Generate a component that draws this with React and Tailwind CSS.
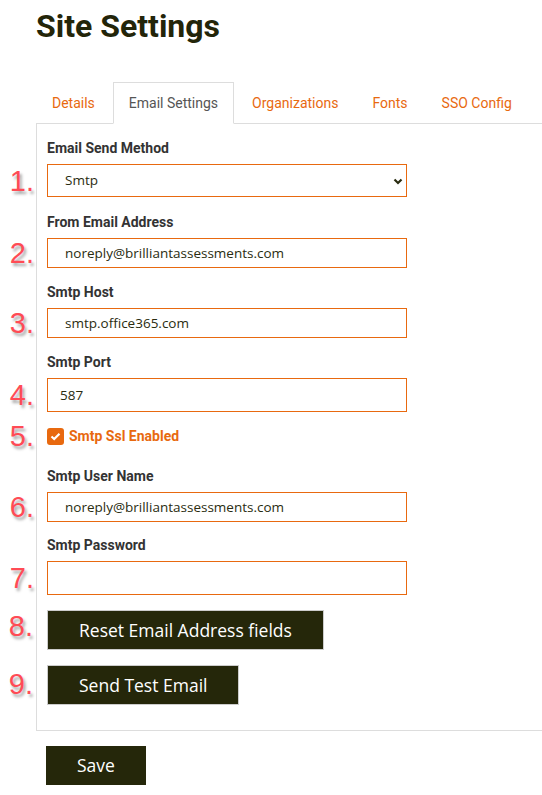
import { useState } from "react";

const tabs = ["Details", "Email Settings", "Organizations", "Fonts", "SSO Config"];

function Marker({ n, className = "" }) {
  return (
    <span
      className={`absolute right-full mr-[13px] top-1/2 -translate-y-1/2 text-[29px] leading-none text-[#ff4b55] font-['Liberation_Sans',Arial,sans-serif] [text-shadow:2px_3px_3px_rgba(0,0,0,0.35)] ${className}`}
    >
      {n}.
    </span>
  );
}

function Field({ label, n, value, type = "text", tall = false, tight = false }) {
  return (
    <div className="mb-[14px]">
      <label className="block text-sm font-bold leading-5 text-[#333] mb-[6px]">{label}</label>
      <div className="relative w-[360px]">
        <Marker n={n} />
        <input
          type={type}
          defaultValue={value}
          className={`w-full border border-[#e8690f] bg-white text-[13.5px] text-[#2a2c10] outline-none font-['Open_Sans',sans-serif] ${
            tall ? "h-[34px]" : "h-[30px]"
          } ${tight ? "pl-[12px]" : "pl-[17px]"}`}
        />
      </div>
    </div>
  );
}

export default function App() {
  const [ssl, setSsl] = useState(true);

  return (
    <div className="bg-white min-h-[795px] pl-[36px] font-['Roboto',Arial,sans-serif]">
      <h1 className="pt-[7px] text-[32px] leading-[38px] font-bold text-[#232509]">Site Settings</h1>

      {/* Tabs */}
      <ul className="flex mt-[37px] border-b border-[#ddd]">
        {tabs.map((t) => {
          const active = t === "Email Settings";
          return (
            <li key={t} className="mr-[2px] -mb-px">
              <a
                href="#"
                className={`block px-[15px] py-[10px] text-[14px] leading-5 border ${
                  active
                    ? "bg-white border-[#ddd] border-b-white text-[#555]"
                    : "border-transparent text-[#e8690f]"
                }`}
              >
                {t}
              </a>
            </li>
          );
        })}
      </ul>

      {/* Panel */}
      <div className="border-l border-b border-[#ddd] pl-[10px] pt-[14px] pb-[25px]">
        <div className="mb-[15px]">
          <label className="block text-sm font-bold leading-5 text-[#333] mb-[6px]">Email Send Method</label>
          <div className="relative w-[360px]">
            <Marker n={1} />
            <select
              defaultValue="Smtp"
              className="w-full h-[33px] appearance-none border border-[#e8690f] bg-white pl-[17px] text-[13.5px] text-[#2a2c10] outline-none font-['Open_Sans',sans-serif]"
            >
              <option>Smtp</option>
              <option>SendGrid</option>
            </select>
            <svg
              className="absolute right-[4px] top-1/2 -translate-y-1/2 pointer-events-none"
              width="10"
              height="8"
              viewBox="0 0 10 8"
            >
              <path d="M1.5 2.5 L5 6 L8.5 2.5" fill="none" stroke="#2a2c10" strokeWidth="2.2" />
            </svg>
          </div>
        </div>

        <Field label="From Email Address" n={2} value="noreply@brilliantassessments.com" />
        <Field label="Smtp Host" n={3} value="smtp.office365.com" />
        <Field label="Smtp Port" n={4} value="587" tall tight />

        {/* SSL checkbox */}
        <div className="relative flex items-center h-[20px] mt-[14px] mb-[20px]">
          <Marker n={5} />
          <button
            type="button"
            onClick={() => setSsl(!ssl)}
            className="w-[17px] h-[17px] rounded-[3px] bg-[#e8690f] flex items-center justify-center"
          >
            {ssl && (
              <svg width="11" height="9" viewBox="0 0 11 9">
                <path d="M1.5 4.5 L4.2 7 L9.5 1.8" fill="none" stroke="#fff" strokeWidth="2.2" />
              </svg>
            )}
          </button>
          <span className="ml-[5px] text-sm font-bold text-[#e8690f]">Smtp Ssl Enabled</span>
        </div>

        <Field label="Smtp User Name" n={6} value="noreply@brilliantassessments.com" />
        <div className="-mt-px">
          <Field label="Smtp Password" n={7} value="" type="password" tall />
        </div>

        <div className="relative w-fit mt-[15px]">
          <Marker n={8} className="-mt-[4px] mr-[14px]" />
          <button
            type="button"
            className="h-[40px] px-[31px] border border-[#ccc] bg-[#25270a] text-white text-[17.5px] font-['Open_Sans',sans-serif]"
          >
            Reset Email Address fields
          </button>
        </div>

        <div className="relative w-fit mt-[15px]">
          <Marker n={9} className="-mt-[1px] mr-[14px]" />
          <button
            type="button"
            className="h-[40px] px-[31px] border border-[#ccc] bg-[#25270a] text-white text-[17.5px] font-['Open_Sans',sans-serif]"
          >
            Send Test Email
          </button>
        </div>
      </div>

      <button
        type="button"
        className="mt-[15px] ml-[10px] h-[39px] px-[31px] bg-[#25270a] text-white text-[17.5px] font-['Open_Sans',sans-serif]"
      >
        Save
      </button>
    </div>
  );
}
